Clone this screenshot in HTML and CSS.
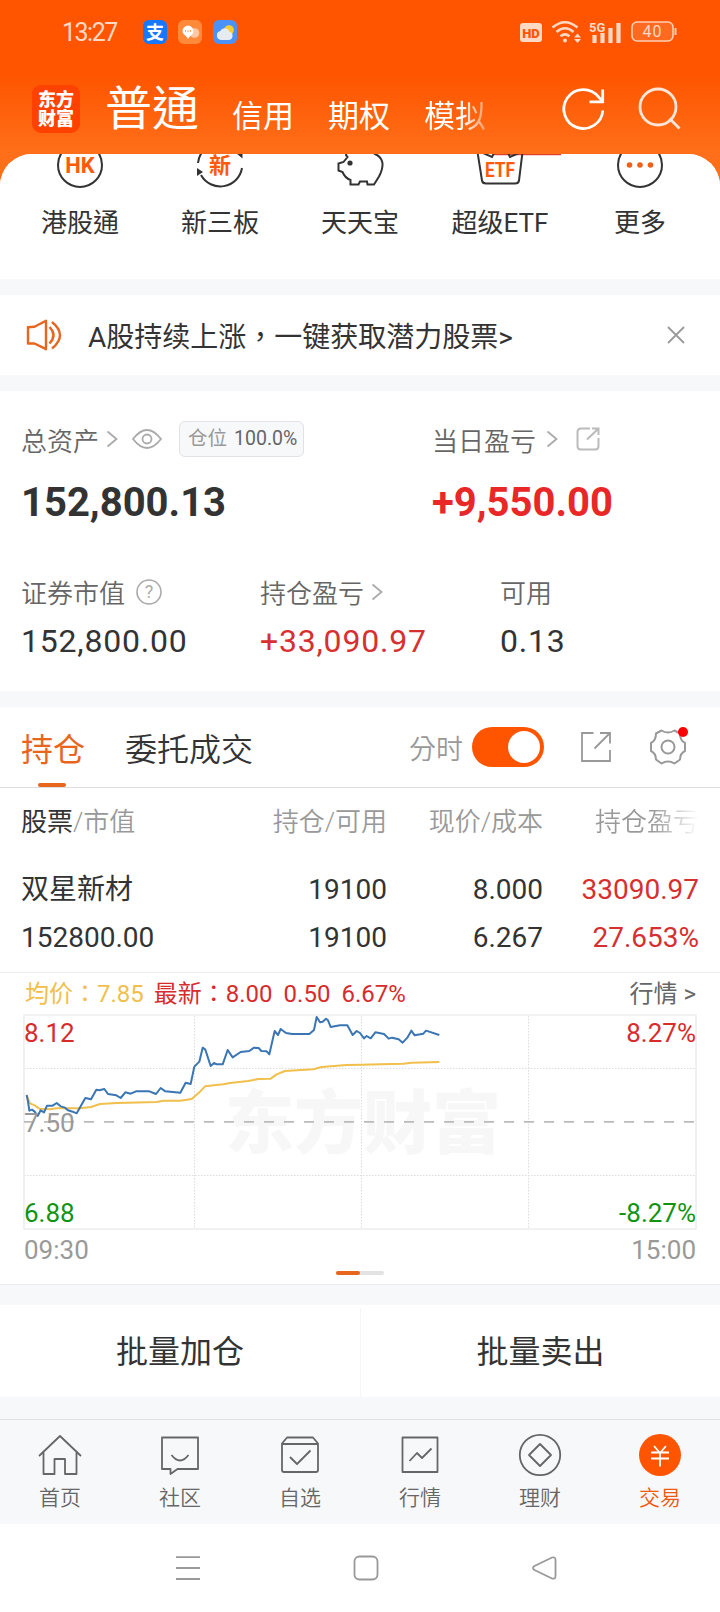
FILE: index.html
```html
<!DOCTYPE html>
<html lang="zh-TW">
<head>
    <meta charset="UTF-8">
    <meta name="viewport" content="width=device-width, initial-scale=1.0">
    <title>交易</title>
    <link rel="stylesheet" href="styles.css">
</head>
<body>
    <header>
        <div class="status-bar">
            <span class="clock">13:27</span>
            <div class="status-apps">
                <svg width="24" height="24"><rect width="24" height="24" rx="6" fill="#1677ff"/><text x="12" y="18.5" class="app-glyph">支</text></svg>
                <svg width="24" height="24"><rect width="24" height="24" rx="6" fill="#ff8a3a"/><circle cx="16.5" cy="13" r="4.8" fill="#ffc9a4"/><path d="M10 5.5a5.6 5.6 0 0 1 5.5 5.5c0 3.5-3.5 4.5-5.5 8c-1.5-3.5-5.5-4.5-5.5-8A5.6 5.6 0 0 1 10 5.5z" fill="#fff"/><path d="M7 11h1m1.5 0h1m1.5 0h1" stroke="#ff8a3a" stroke-width="1.3"/></svg>
                <svg width="24" height="24"><rect width="24" height="24" rx="6" fill="#4a92f7"/><circle cx="16" cy="10" r="4.8" fill="#ffce2e"/><path d="M8 20a4.6 4.6 0 0 1-.8-9a5 5 0 0 1 9.3.8a4.2 4.2 0 0 1-.5 8.2z" fill="#e6ebf0"/></svg>
            </div>
            <div class="status-icons">
                <svg width="22" height="19"><rect width="22" height="19" rx="3" fill="#ffd9c4"/><text x="11" y="14.5" class="hd">HD</text></svg>
                <svg width="30" height="24" fill="none" stroke="#ffd9c4" stroke-width="2.6"><path d="M1.5 7.5Q14 -3 26.5 7.5M5.5 12Q14 4.5 22.5 12M9.5 16.3Q14 12.5 18.5 16.3"/><circle cx="14" cy="20.5" r="2" fill="#ffd9c4" stroke="none"/><path d="M26.5 13.5l3.5 4h-7zM26.5 23l3.5-4h-7z" fill="#ffd9c4" stroke="none"/></svg>
                <svg width="32" height="23"><text x="-1" y="11" class="net">5G</text><path d="M4.5 22v-8M12.5 22v-10M20.5 22v-15M28.5 22v-20" stroke="#ffd9c4" stroke-width="4.2"/></svg>
                <svg width="46" height="22"><rect x="1" y="1" width="41" height="19" rx="5" fill="#ff6a20" stroke="#ffd0b5" stroke-width="1.6"/><path d="M44.5 7v7" stroke="#ffd0b5" stroke-width="2"/><text x="21.5" y="16" class="battery">40</text></svg>
            </div>
        </div>
        <div class="title-bar">
            <div class="logo">东方<br>财富</div>
            <nav class="account-tabs">
                <span class="active">普通</span>
                <span>信用</span>
                <span>期权</span>
                <span class="fade">模拟</span>
            </nav>
            <svg class="refresh" width="44" height="44" fill="none" stroke="#fff" stroke-width="2.8"><path d="M40.8 23.5A19.5 19.5 0 1 1 36.5 9.8L40 13.8"/><path d="M40.7 2.5v12.3H27.5"/></svg>
            <svg class="search" width="44" height="44" fill="none" stroke="#ffe6d8" stroke-width="2.8"><circle cx="20" cy="20" r="18"/><path d="M31.5 31.5L41.5 41.5"/></svg>
        </div>
    </header>

    <main>
        <section class="shortcuts">
            <div class="shortcut">
                <svg width="60" height="60"><circle cx="30" cy="30" r="22" class="ink"/><text x="30" y="38" class="icon-text">HK</text></svg>
                <span>港股通</span>
            </div>
            <div class="shortcut">
                <svg width="60" height="60"><path d="M8 28A22 22 0 0 1 46 15M52 33A22 22 0 0 1 11 40" class="ink"/><path d="M7 33l6 4-6 4zM52.5 16.5v7l-6-5z" fill="#333"/><text x="30" y="38" class="icon-text">新</text></svg>
                <span>新三板</span>
            </div>
            <div class="shortcut">
                <svg width="60" height="60"><path d="M17 17l-1 3 1.5 2-4 5-5 1.5v7l4 1.5Q15 43 20.5 45v4.500h8l1.500-3h7l.5 3h6.500l5-8Q58 24 44 18.500" class="ink"/><circle cx="20" cy="28" r="2.6" fill="#333"/></svg>
                <span>天天宝</span>
            </div>
            <div class="shortcut">
                <svg width="60" height="60"><path d="M23 19.500h68" stroke="#e04030" stroke-width="1.5"/><path d="M7.5 17L12 45.5Q12.5 48.5 16 48.5H45Q48.5 48.5 49 45.5L52.5 17M13 18l9 4 2-4M49 18l-9 4-2-4" class="ink"/><text x="30" y="42" class="icon-text etf" textLength="30" lengthAdjust="spacingAndGlyphs">ETF</text></svg>
                <span>超级ETF</span>
            </div>
            <div class="shortcut">
                <svg width="60" height="60"><circle cx="30" cy="30" r="22" class="ink"/><g fill="#f0601a"><circle cx="19.5" cy="30" r="2.8"/><circle cx="30" cy="30" r="2.8"/><circle cx="40.5" cy="30" r="2.8"/></g></svg>
                <span>更多</span>
            </div>
        </section>

        <section class="notice">
            <svg width="36" height="32" fill="none" stroke="#e8651d" stroke-width="2.4" stroke-linejoin="round"><path d="M2 8.3L8.5 7.7 20 1.8V30.2L8.5 24.5 2 24.5z"/><path d="M23.5 8Q31.5 16 23.5 24.5M26 3Q42 16 26 29.5"/></svg>
            <p>A股持续上涨，一键获取潜力股票&gt;</p>
            <svg width="18" height="18" stroke="#999" stroke-width="1.8"><path d="M1 1L17 17M17 1L1 17"/></svg>
        </section>

        <section class="assets">
            <div class="assets-main">
                <div class="asset">
                    <div class="asset-label">总资产
                        <svg class="chevron" width="12" height="18"><path d="M1.5 1.5L10.5 9 1.5 16.5"/></svg>
                        <svg class="eye" width="30" height="20" fill="none" stroke="#aaa" stroke-width="1.8"><path d="M1 10Q15 -8 29 10Q15 28 1 10z"/><circle cx="15" cy="10" r="4.5"/></svg>
                        <span class="position"><em>仓位</em>100.0%</span>
                    </div>
                    <div class="total">152,800.13</div>
                </div>
                <div class="asset">
                    <div class="asset-label">当日盈亏
                        <svg class="chevron day" width="12" height="18"><path d="M1.5 1.5L10.5 9 1.5 16.5"/></svg>
                        <svg width="24" height="24" fill="none" stroke="#bbb" stroke-width="2"><path d="M14 1.5H5Q1.5 1.5 1.5 5V19Q1.5 22.5 5 22.5H19Q22.5 22.5 22.5 19V11M16 1.5H22.5V8M22 2L11 12.5"/></svg>
                    </div>
                    <div class="total up">+9,550.00</div>
                </div>
            </div>
            <div class="assets-sub">
                <div class="asset">
                    <div class="asset-label">证券市值
                        <svg class="help" width="28" height="28"><circle cx="14" cy="14" r="12" fill="none" stroke="#aaa" stroke-width="1.6"/><text x="14" y="20">?</text></svg>
                    </div>
                    <div class="value">152,800.00</div>
                </div>
                <div class="asset">
                    <div class="asset-label">持仓盈亏
                        <svg class="chevron" width="12" height="18"><path d="M1.5 1.5L10.5 9 1.5 16.5"/></svg>
                    </div>
                    <div class="value red">+33,090.97</div>
                </div>
                <div class="asset">
                    <div class="asset-label">可用</div>
                    <div class="value">0.13</div>
                </div>
            </div>
        </section>

        <section class="holdings">
            <div class="tabs">
                <span class="tab active">持仓</span>
                <span class="tab">委托成交</span>
                <span class="minute">分时</span>
                <span class="toggle"></span>
                <svg class="share" width="32" height="32" fill="none" stroke="#999" stroke-width="1.8"><path d="M13.5 2H2V30H30V19M20 2H30V12.5M30 2L14.5 17.5"/></svg>
                <div class="settings">
                    <svg width="38" height="38" fill="none" stroke="#999" stroke-width="2" stroke-linejoin="round"><path d="M12.5 2.5Q19 6.5 25.5 2.5L31 5.5Q31 12.5 36 15V23Q31 25.5 31 31.5L25.5 35.5Q19 31.5 12.5 35.5L7 31.5Q7 25.5 2 23V15Q7 12.5 7 5.5z"/><circle cx="19" cy="19" r="6.5"/></svg>
                    <i class="dot"></i>
                </div>
            </div>
            <div class="table">
                <div class="row head"><span><b>股票</b>/市值</span><span>持仓/可用</span><span>现价/成本</span><span class="head-fade">持仓盈亏</span></div>
                <div class="row"><span>双星新材</span><span>19100</span><span>8.000</span><span class="red">33090.97</span></div>
                <div class="row"><span>152800.00</span><span>19100</span><span>6.267</span><span class="red">27.653%</span></div>
            </div>
        </section>

        <section class="chart">
            <div class="chart-head">
                <span class="avg">均价：7.85</span>
                <span class="last">最新：8.00</span>
                <span class="last">0.50</span>
                <span class="last">6.67%</span>
                <span class="quote">行情 &gt;</span>
            </div>
            <svg width="720" height="260" fill="none">
                <text x="363" y="138" class="watermark" textLength="276">东方财富</text>
                <path d="M194.5 6V218M361.5 6V218M528.5 6V218M24 58.5H696M24 165.5H696" stroke="#ddd" stroke-dasharray="1.5 1.5"/>
                <rect x="24" y="5" width="672" height="214" stroke="#eee" stroke-width="1.6"/>
                <path d="M24 111.8H696" stroke="#bbb" stroke-width="1.8" stroke-dasharray="10 10"/>
                <g transform="translate(0 -45) scale(.33333)" stroke-width="6" stroke-linejoin="round">
                    <polyline stroke="#f0bf4c" points="80,390 90,415 104,421 118,431 150,433 170,430 240,430 273,426 300,417 350,414 470,411 490,407 541,407 575,402 600,380 615,364 670,358 690,354 745,348 775,342 812,341 830,328 855,318 940,313 965,306 1040,300 1080,299 1210,296 1235,293 1318,291"/>
                    <polyline stroke="#3a75b4" points="80,390 84,410 88,437 96,434 104,440 113,453 122,436 132,442 141,422 158,422 170,414 182,424 195,428 204,436 218,440 230,445 242,424 256,399 273,403 289,374 298,376 313,372 324,387 349,391 362,399 376,382 392,386 408,379 448,379 468,387 482,369 496,379 541,383 557,353 572,357 583,305 598,290 608,248 616,254 632,303 642,294 650,298 668,298 683,255 698,277 722,261 748,258 762,248 776,249 784,258 800,259 808,268 824,198 834,210 842,192 858,204 876,207 928,207 942,195 950,156 960,172 968,170 978,161 984,166 992,186 1020,181 1042,181 1058,210 1070,198 1080,204 1092,220 1100,213 1112,220 1126,202 1152,207 1166,221 1176,218 1196,223 1208,233 1222,218 1234,197 1244,211 1270,206 1278,197 1318,210"/>
                </g>
                <g class="axis">
                    <text x="24" y="32" fill="#d62c2c">8.12</text>
                    <text x="24" y="122" fill="#999">7.50</text>
                    <text x="24" y="212" fill="#129412">6.88</text>
                    <text x="24" y="249" fill="#999">09:30</text>
                    <g text-anchor="end">
                        <text x="696" y="32" fill="#d62c2c">8.27%</text>
                        <text x="696" y="212" fill="#129412">-8.27%</text>
                        <text x="696" y="249" fill="#999">15:00</text>
                    </g>
                </g>
            </svg>
            <div class="pager"><i></i></div>
        </section>

        <section class="batch">
            <span>批量加仓</span>
            <span>批量卖出</span>
        </section>
    </main>

    <nav class="tab-bar">
        <a>
            <svg width="44" height="44"><path d="M1 23L22 3 43 23M5.5 19.5V41H16.5V26H27V41H38.5V19.5"/></svg>
            首页
        </a>
        <a>
            <svg width="44" height="44"><path d="M4 4.5H40V36H19.5L12.5 41V36H4zM13.5 22Q22 33 30.5 22"/></svg>
            社区
        </a>
        <a>
            <svg width="44" height="44"><path d="M4 10.5L9 4.5H35L40 10.5V37Q40 39 38 39H6Q4 39 4 37zM4 11H40M12 24L19 31 32.5 17.5"/></svg>
            自选
        </a>
        <a>
            <svg width="44" height="44"><path d="M4.5 4.5H39.5V39H4.5zM11.5 28L19 20 24 25 33.5 15.5"/></svg>
            行情
        </a>
        <a>
            <svg width="44" height="44"><circle cx="22" cy="22" r="20.2"/><path d="M22 11L33 22 22 33 11 22z"/></svg>
            理财
        </a>
        <a class="active">
            <svg width="44" height="44"><circle cx="22" cy="22" r="21"/><path d="M16 13L22 20 28 13M13 19.5H31M13 25.5H31M22 20V33.5"/></svg>
            交易
        </a>
    </nav>

    <div class="system-nav">
        <svg width="26" height="26"><path d="M1 2.2H25M1 13H25M1 24H25"/></svg>
        <svg width="26" height="26"><rect x="1.5" y="1.5" width="23" height="23" rx="5"/></svg>
        <svg width="26" height="26"><path d="M3.5 11L21 2.5Q24.5 1.5 24.5 5V21Q24.5 24.5 21 23.5L3.5 15Q.5 13 3.5 11z"/></svg>
    </div>
</body>
</html>
```
FILE: styles.css
```css
* {
    box-sizing: border-box;
}

body {
    margin: 0;
    width: 720px;
    font-family: Roboto, "Noto Sans CJK TC", sans-serif;
    font-weight: 350;
    font-size: 26px;
    color: #333;
    background: #fff;
}

svg {
    display: block;
    flex: none;
    overflow: visible;
}

header {
    height: 184px;
    background: linear-gradient(#ff5500 75px, #ff6e18 150px);
}

.status-bar {
    display: flex;
    align-items: center;
    height: 64px;
    padding: 0 43px 0 62px;
    color: #ffd9c4;
}

.clock {
    width: 81px;
    font-size: 25px;
    font-weight: 400;
    letter-spacing: -1.5px;
}

.status-apps {
    display: flex;
    gap: 11px;
}

.app-glyph {
    font-size: 18px;
    font-weight: 700;
    fill: #fff;
    text-anchor: middle;
}

.status-icons {
    display: flex;
    align-items: center;
    margin-left: auto;
    gap: 9px;
}

.hd {
    font-size: 13px;
    font-weight: 900;
    fill: #ff5500;
    text-anchor: middle;
}

.net {
    font-size: 13px;
    font-weight: 700;
    fill: #ffd9c4;
}

.battery {
    font-size: 16px;
    font-weight: 400;
    letter-spacing: 1px;
    fill: #ffd9c4;
    text-anchor: middle;
}

.title-bar {
    display: flex;
    align-items: center;
    height: 90px;
    padding: 0 38px 0 32px;
}

.logo {
    width: 48px;
    height: 48px;
    padding-top: 5px;
    border-radius: 9px;
    background: #ff4200;
    color: #fff;
    font-size: 18px;
    font-weight: 900;
    line-height: 19px;
    text-align: center;
}

.account-tabs {
    display: flex;
    align-items: flex-end;
    width: 480px;
    padding-left: 25px;
    color: #fff;
    font-size: 31px;
    font-weight: 400;
    line-height: 44px;
}

.account-tabs span {
    margin-right: 34px;
}

.account-tabs .active {
    margin-right: 33px;
    font-size: 47px;
    line-height: 60px;
}

.account-tabs .fade {
    color: transparent;
    background: linear-gradient(90deg, #fff 60%, #ff9a62);
    background-clip: text;
}

.refresh {
    margin-left: 2px;
}

.search {
    margin-left: auto;
}

main {
    margin-top: -30px;
    overflow: hidden;
    border-radius: 32px 32px 0 0;
    background: #f7f8fa;
}

section {
    background: #fff;
}

.shortcuts {
    display: grid;
    grid-template-columns: repeat(5, 140px);
    height: 125px;
    padding: 0 10px;
}

.shortcut {
    display: flex;
    flex-direction: column;
    align-items: center;
    margin-top: -19px;
    font-weight: 400;
    line-height: 56px;
    white-space: nowrap;
}

.ink {
    fill: none;
    stroke: #333;
    stroke-width: 2;
}

.icon-text {
    font-size: 22px;
    font-weight: 700;
    fill: #ff5a0a;
    text-anchor: middle;
}

.icon-text.etf {
    font-size: 21px;
}

.notice {
    display: flex;
    align-items: center;
    height: 80px;
    margin: 16px 0;
    padding: 0 35px 0 26px;
    font-size: 28px;
    font-weight: 400;
}

.notice p {
    flex: 1;
    margin: 0;
    padding-left: 26px;
}

.assets {
    height: 300px;
    padding: 26px 21px 0;
}

.assets-main {
    display: grid;
    grid-template-columns: 411px 1fr;
    height: 155px;
}

.assets-sub {
    display: grid;
    grid-template-columns: 239px 240px 1fr;
}

.asset-label {
    display: flex;
    align-items: center;
    height: 44px;
    color: #666;
}

.assets-sub .asset-label {
    height: 39px;
}

.chevron {
    margin-left: 7px;
    fill: none;
    stroke: #aaa;
    stroke-width: 1.8;
}

.chevron.day {
    margin: 0 18px 0 10px;
}

.eye {
    margin-left: 14px;
}

.position {
    height: 36px;
    margin-left: 17px;
    padding: 0 6px 0 8px;
    border: 1px solid #e2e2e6;
    border-radius: 6px;
    background: #f7f8fa;
    font-size: 19.5px;
    font-weight: 400;
    line-height: 34px;
}

.position em {
    margin-right: 7px;
    color: #999;
    font-style: normal;
}

.help {
    margin-left: 10px;
}

.help text {
    font-size: 18px;
    font-weight: 400;
    fill: #aaa;
    text-anchor: middle;
}

.total {
    font-size: 40px;
    font-weight: 700;
    line-height: 84px;
}

.up {
    color: #e92727;
}

.value {
    font-size: 32px;
    font-weight: 400;
    letter-spacing: 0.8px;
    line-height: 60px;
}

.red {
    color: #d63030;
}

.holdings {
    margin-top: 16px;
}

.tabs {
    display: flex;
    align-items: center;
    height: 81px;
    padding-left: 21px;
    border-bottom: 1px solid #ddd;
    font-size: 32px;
}

.tab {
    position: relative;
    margin-right: 40px;
}

.tab.active {
    color: #e8651d;
    font-weight: 400;
}

.tab.active::after {
    content: "";
    position: absolute;
    left: 17px;
    bottom: -17px;
    width: 28px;
    height: 4px;
    border-radius: 2px;
    background: #e8651d;
}

.minute {
    margin-left: auto;
    color: #999;
    font-size: 27px;
}

.toggle {
    width: 72px;
    height: 40px;
    margin-left: 9px;
    padding: 4px;
    border-radius: 20px;
    background: #ff5500;
}

.toggle::after {
    content: "";
    display: block;
    width: 32px;
    height: 32px;
    margin-left: auto;
    border-radius: 50%;
    background: #fff;
}

.share {
    margin-left: 36px;
}

.settings {
    position: relative;
    margin: 0 33px 0 37px;
}

.dot {
    position: absolute;
    top: -1px;
    right: -1px;
    width: 10px;
    height: 10px;
    border-radius: 50%;
    background: #f00;
}

.table {
    padding: 0 21px;
}

.row {
    display: grid;
    grid-template-columns: 200px 166px 156px 156px;
    height: 48px;
    font-size: 28px;
    font-weight: 400;
    line-height: 48px;
    text-align: right;
}

.row span:first-child {
    text-align: left;
}

.row.head {
    height: 78px;
    color: #999;
    font-size: 26px;
    font-weight: 350;
    line-height: 68px;
}

.row.head b {
    color: #333;
    font-weight: 400;
}

.row .head-fade {
    color: transparent;
    background: linear-gradient(90deg, #999 70%, #fff);
    background-clip: text;
}

.chart {
    height: 323px;
    padding-top: 10px;
    border-bottom: 1px solid #eaeaea;
}

.chart-head {
    display: flex;
    align-items: baseline;
    height: 38px;
    padding: 0 24px 0 25px;
    border-top: 1px solid #eee;
    font-size: 24px;
    font-weight: 400;
    line-height: 43px;
    white-space: nowrap;
}

.avg {
    margin-right: 10px;
    color: #f0bf4c;
}

.last {
    margin-right: 11px;
    color: #d62c2c;
}

.quote {
    margin-left: auto;
    color: #666;
}

.axis {
    font-size: 26px;
    font-weight: 400;
}

.watermark {
    font-size: 69px;
    font-weight: 900;
    fill: #f7f7f7;
    text-anchor: middle;
}

.pager {
    width: 48px;
    height: 4px;
    margin: 1px auto 0;
    border-radius: 2px;
    background: #e2e2e2;
}

.pager i {
    display: block;
    width: 24px;
    height: 4px;
    border-radius: 2px;
    background: #e8651d;
}

.batch {
    display: grid;
    grid-template-columns: 1fr 1fr;
    margin: 20px 0 22px;
    padding-top: 3px;
    font-size: 32px;
    font-weight: 400;
    line-height: 89px;
    text-align: center;
}

.batch span + span {
    border-left: 1px solid #f5f5f5;
}

.tab-bar {
    display: grid;
    grid-template-columns: repeat(6, 1fr);
    height: 105px;
    padding-top: 13px;
    border-top: 1px solid #e0e0e0;
    background: #f7f8fa;
}

.tab-bar a {
    display: flex;
    flex-direction: column;
    align-items: center;
    color: #666;
    font-size: 21px;
    line-height: 43px;
}

.tab-bar svg {
    fill: none;
    stroke: #666;
    stroke-width: 1.8;
    stroke-linejoin: round;
}

.tab-bar .active {
    color: #f2590d;
}

.tab-bar .active circle {
    fill: #ff5500;
    stroke: none;
}

.tab-bar .active path {
    stroke: #fff;
}

.system-nav {
    display: flex;
    justify-content: center;
    gap: 152px;
    height: 88px;
    padding: 31px 0 0 11px;
    background: #fff;
}

.system-nav svg {
    fill: none;
    stroke: #999;
    stroke-width: 1.8;
}
```
